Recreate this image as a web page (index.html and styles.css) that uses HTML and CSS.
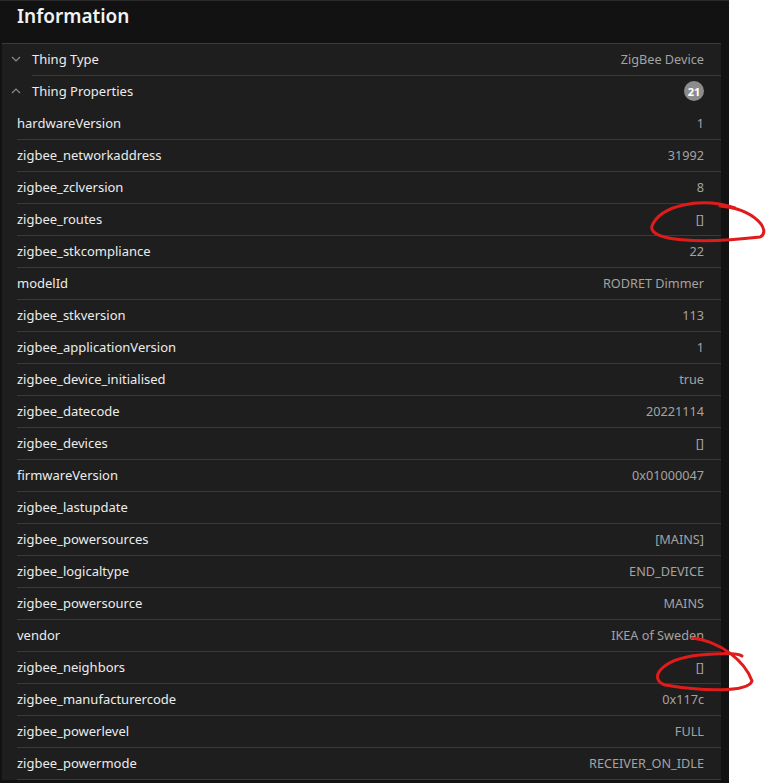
FILE: index.html
```html
<!DOCTYPE html>
<html>
<head>
<meta charset="utf-8">
<link rel="stylesheet" href="styles.css">
</head>
<body>
<div class="panel">
  <div class="title">Information</div>
  <div class="list">
    <div class="row group sep-wide">
      <svg class="chev" viewBox="0 0 10 6" width="10" height="6"><path d="M1 1 L5 5 L9 1" fill="none" stroke="#8a8a8a" stroke-width="1.2"/></svg>
      <span class="label">Thing Type</span><span class="value">ZigBee Device</span>
    </div>
    <div class="row group nosep">
      <svg class="chev" viewBox="0 0 10 6" width="10" height="6"><path d="M1 5 L5 1 L9 5" fill="none" stroke="#8a8a8a" stroke-width="1.2"/></svg>
      <span class="label">Thing Properties</span><span class="badge">21</span>
    </div>
    <div class="row"><span class="label">hardwareVersion</span><span class="value">1</span></div>
    <div class="row"><span class="label">zigbee_networkaddress</span><span class="value">31992</span></div>
    <div class="row"><span class="label">zigbee_zclversion</span><span class="value">8</span></div>
    <div class="row"><span class="label">zigbee_routes</span><span class="value">[]</span></div>
    <div class="row"><span class="label">zigbee_stkcompliance</span><span class="value">22</span></div>
    <div class="row"><span class="label">modelId</span><span class="value">RODRET Dimmer</span></div>
    <div class="row"><span class="label">zigbee_stkversion</span><span class="value">113</span></div>
    <div class="row"><span class="label">zigbee_applicationVersion</span><span class="value">1</span></div>
    <div class="row"><span class="label">zigbee_device_initialised</span><span class="value">true</span></div>
    <div class="row"><span class="label">zigbee_datecode</span><span class="value">20221114</span></div>
    <div class="row"><span class="label">zigbee_devices</span><span class="value">[]</span></div>
    <div class="row"><span class="label">firmwareVersion</span><span class="value">0x01000047</span></div>
    <div class="row"><span class="label">zigbee_lastupdate</span><span class="value"></span></div>
    <div class="row"><span class="label">zigbee_powersources</span><span class="value">[MAINS]</span></div>
    <div class="row"><span class="label">zigbee_logicaltype</span><span class="value">END_DEVICE</span></div>
    <div class="row"><span class="label">zigbee_powersource</span><span class="value">MAINS</span></div>
    <div class="row"><span class="label">vendor</span><span class="value">IKEA of Sweden</span></div>
    <div class="row"><span class="label">zigbee_neighbors</span><span class="value">[]</span></div>
    <div class="row"><span class="label">zigbee_manufacturercode</span><span class="value">0x117c</span></div>
    <div class="row"><span class="label">zigbee_powerlevel</span><span class="value">FULL</span></div>
    <div class="row"><span class="label">zigbee_powermode</span><span class="value">RECEIVER_ON_IDLE</span></div>
  </div>
  <svg class="marks" width="767" height="783" viewBox="0 0 767 783">
    <path d="M735 207 C 700 195, 660 205, 652 225 C 648 240, 700 243, 760 236 C 772 230, 755 208, 720 205" fill="none" stroke="#e01b1b" stroke-width="3" stroke-linecap="round"/>
    <path d="M692 637 C 720 640, 745 660, 752 680 C 748 692, 700 690, 665 684 C 648 678, 660 658, 700 654 C 720 652, 738 652, 742 655" fill="none" stroke="#e01b1b" stroke-width="3" stroke-linecap="round"/>
  </svg>
</div>
</body>
</html>
```
FILE: styles.css
```css
html, body {
  margin: 0;
  padding: 0;
  background: #ffffff;
}
body {
  font-family: "Noto Sans", "Open Sans", sans-serif;
  font-size: 13px;
}
.panel {
  position: relative;
  width: 729px;
  height: 783px;
  background: #121212;
  border-top: 1px solid #2a2a2a;
  box-sizing: border-box;
}
.title {
  height: 42px;
  padding-left: 17px;
  color: #f2f2f2;
  font-size: 19px;
  font-weight: 600;
  line-height: 30px;
  box-sizing: border-box;
}
.list {
  margin-left: 2px;
  width: 719px;
  background: #1e1e1e;
  border-top: 1px solid #3a3a3a;
}
.row {
  position: relative;
  display: flex;
  align-items: center;
  height: 32px;
  padding: 0 17px 2px 15px;
  box-sizing: border-box;
}
.row::after {
  content: "";
  position: absolute;
  left: 15px;
  right: 0;
  bottom: 0;
  height: 1px;
  background: #3a3a3a;
}
.row.group {
  padding-left: 9px;
}
.row.sep-wide::after {
  left: 30px;
}
.row.nosep::after {
  display: none;
}
.chev {
  width: 10px;
  margin-right: 11px;
}
.label {
  flex: 1;
  color: #ececec;
}
.value {
  color: #a3a3a3;
  font-size: 12.7px;
}
.badge {
  display: inline-flex;
  align-items: center;
  justify-content: center;
  width: 20px;
  height: 20px;
  border-radius: 50%;
  background: #8c8c8c;
  color: #ffffff;
  font-size: 11px;
  font-weight: 700;
}
.marks {
  position: absolute;
  left: 0;
  top: 0;
  pointer-events: none;
}
```
